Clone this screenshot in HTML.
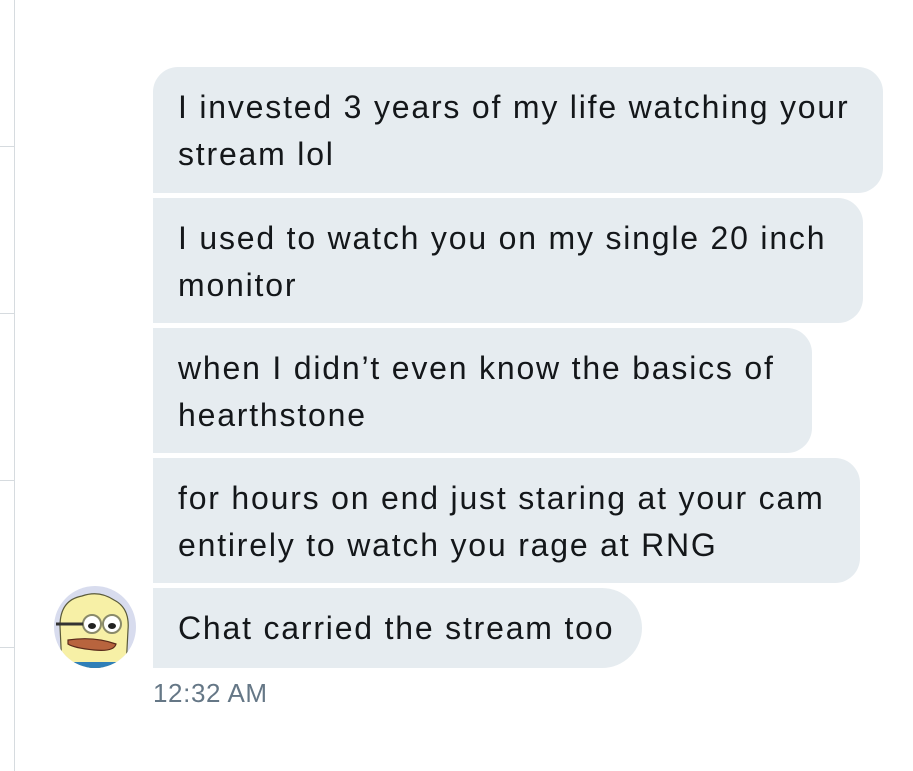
<!DOCTYPE html>
<html><head><style>
body{margin:0;width:913px;height:771px;background:#fff;position:relative;overflow:hidden;font-family:"Liberation Sans",Arial,sans-serif;}
.vl{position:absolute;left:14px;top:0;width:1px;height:771px;background:#d6dbdf}
.hl{position:absolute;left:0;width:14px;height:1px;background:#d6dbdf}
.b{position:absolute;left:153px;background:#e6ecf0;color:#14171a;font-size:32px;letter-spacing:1.8px;line-height:47px;padding:17px 25px 15px;box-sizing:border-box;border-radius:0 25px 25px 0;white-space:nowrap}
.ts{position:absolute;left:153px;top:678px;font-size:26px;letter-spacing:0.6px;color:#657786}
</style></head><body>
<div class="vl"></div>
<div class="hl" style="top:146px"></div>
<div class="hl" style="top:313px"></div>
<div class="hl" style="top:480px"></div>
<div class="hl" style="top:647px"></div>
<div class="b" style="top:67px;height:126px;width:730px;border-radius:25px 25px 25px 0">I invested 3 years of my life watching your<br>stream lol</div>
<div class="b" style="top:198px;height:125px;width:710px">I used to watch you on my single 20 inch<br>monitor</div>
<div class="b" style="top:328px;height:125px;width:659px">when I didn’t even know the basics of<br>hearthstone</div>
<div class="b" style="top:458px;height:125px;width:707px">for hours on end just staring at your cam<br>entirely to watch you rage at RNG</div>
<div class="b" style="top:588px;height:80px;width:489px;border-radius:0 40px 40px 0">Chat carried the stream too</div>
<div class="ts">12:32 AM</div>
<svg style="position:absolute;left:54px;top:586px" width="82" height="82" viewBox="0 0 82 82">
<defs><clipPath id="c"><circle cx="41" cy="41" r="41"/></clipPath></defs>
<g clip-path="url(#c)">
<rect width="82" height="82" fill="#d8dcee"/>
<path d="M8 82 L6 40 Q6 14 28 10 Q45 4 60 14 Q76 22 74 44 L72 82 Z" fill="#f7f0a6" stroke="#5a5a3a" stroke-width="1.2"/>
<rect x="0" y="76" width="82" height="8" fill="#2f7fb8"/>
<circle cx="38" cy="38" r="9" fill="#fff" stroke="#8a8a6a" stroke-width="2"/>
<circle cx="58" cy="38" r="9" fill="#fff" stroke="#8a8a6a" stroke-width="2"/>
<ellipse cx="38" cy="40" rx="4" ry="3" fill="#222"/>
<ellipse cx="58" cy="40" rx="4" ry="3" fill="#222"/>
<path d="M2 38 L29 38" stroke="#333" stroke-width="3"/>
<path d="M14 54 Q40 50 62 58 Q60 66 40 64 Q20 62 14 58 Z" fill="#b8643e" stroke="#5a2a1a" stroke-width="1.2"/>
</g></svg>
</body></html>
